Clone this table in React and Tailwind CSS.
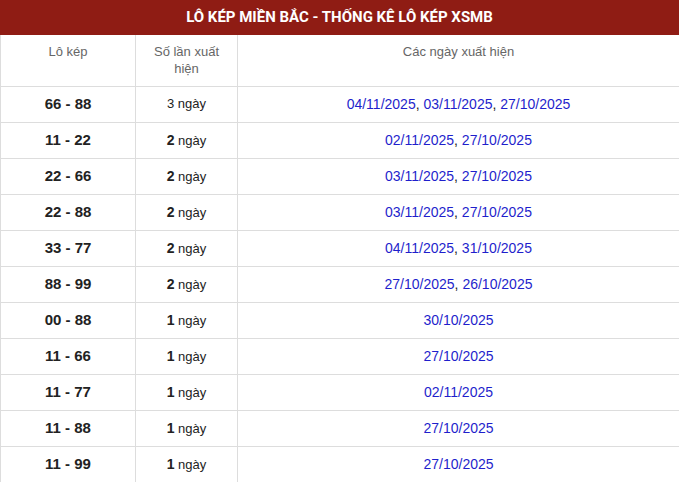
import React from 'react';

const rows = [
  { pair: '66 - 88', count: 3, bold: false, dates: ['04/11/2025', '03/11/2025', '27/10/2025'] },
  { pair: '11 - 22', count: 2, bold: true, dates: ['02/11/2025', '27/10/2025'] },
  { pair: '22 - 66', count: 2, bold: true, dates: ['03/11/2025', '27/10/2025'] },
  { pair: '22 - 88', count: 2, bold: true, dates: ['03/11/2025', '27/10/2025'] },
  { pair: '33 - 77', count: 2, bold: true, dates: ['04/11/2025', '31/10/2025'] },
  { pair: '88 - 99', count: 2, bold: true, dates: ['27/10/2025', '26/10/2025'] },
  { pair: '00 - 88', count: 1, bold: true, dates: ['30/10/2025'] },
  { pair: '11 - 66', count: 1, bold: true, dates: ['27/10/2025'] },
  { pair: '11 - 77', count: 1, bold: true, dates: ['02/11/2025'] },
  { pair: '11 - 88', count: 1, bold: true, dates: ['27/10/2025'] },
  { pair: '11 - 99', count: 1, bold: true, dates: ['27/10/2025'] },
];

export default function App() {
  return (
    <div className="w-[679px] h-[482px] overflow-hidden bg-white font-['Liberation_Sans',Arial,sans-serif]">
      {/* Tiêu đề */}
      <div className="h-[35px] bg-[#8f1c14] flex items-center justify-center">
        <h2 className="text-white font-bold text-[15px] font-['Roboto',sans-serif] tracking-[0px]">
          LÔ KÉP MIỀN BẮC - THỐNG KÊ LÔ KÉP XSMB
        </h2>
      </div>

      <table className="w-[680px] border-collapse table-fixed text-[14px]">
        <colgroup>
          <col className="w-[135px]" />
          <col className="w-[102px]" />
          <col />
        </colgroup>
        <thead>
          <tr className="h-[51px] text-[#666] text-[13px] align-top">
            <th className="font-normal border border-[#ddd] border-t-0 pt-[8px] leading-[17px]">Lô kép</th>
            <th className="font-normal border border-[#ddd] border-t-0 pt-[8px] px-2 leading-[17px]">Số lần xuất hiện</th>
            <th className="font-normal border border-[#ddd] border-t-0 pt-[8px] leading-[17px]">Các ngày xuất hiện</th>
          </tr>
        </thead>
        <tbody>
          {rows.map((r) => (
            <tr key={r.pair} className="h-[36px] text-center text-[#222]">
              <td className="border border-[#ddd] font-bold text-[15px]">{r.pair}</td>
              <td className="border border-[#ddd] text-[13px]">
                <span className={r.bold ? 'font-bold text-[14px]' : ''}>{r.count}</span> ngày
              </td>
              <td className="border border-[#ddd]">
                {r.dates.map((d, i) => (
                  <React.Fragment key={d + i}>
                    {i > 0 && <span className="text-[#222]">, </span>}
                    <span className="text-[#1f1fcc]">{d}</span>
                  </React.Fragment>
                ))}
              </td>
            </tr>
          ))}
        </tbody>
      </table>
    </div>
  );
}
